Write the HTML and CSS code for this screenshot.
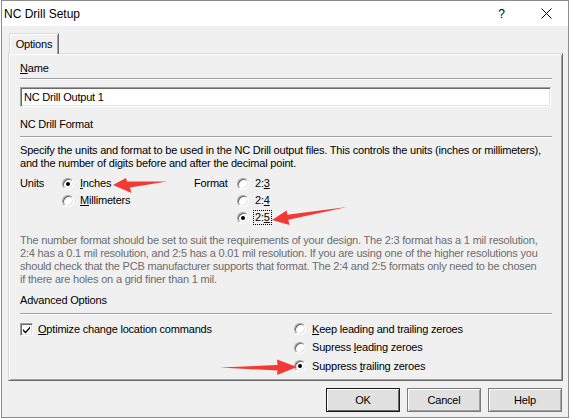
FILE: index.html
```html
<!DOCTYPE html>
<html>
<head>
<meta charset="utf-8">
<link rel="stylesheet" href="styles.css">
</head>
<body>
<div class="window">
  <div class="titlebar">
    <span class="title">NC Drill Setup</span>
    <span class="help">?</span>
    <span class="close"><svg width="11" height="11" viewBox="0 0 11 11"><path d="M0.5 0.5 L10.5 10.5 M10.5 0.5 L0.5 10.5" stroke="#000" stroke-width="1" fill="none"/></svg></span>
  </div>
  <div class="client">
    <div class="tabs"><div class="tab">Options</div></div>
    <div class="panel">
      <div class="section-label"><u>N</u>ame</div>
      <div class="sep"></div>
      <div class="input">NC Drill Output 1</div>
      <div class="section-label gap-lg">NC Drill Format</div>
      <div class="sep sep-sm"></div>
      <p class="desc">Specify the units and format to be used in the NC Drill output files. This controls the units (inches or millimeters),<br>and the number of digits before and after the decimal point.</p>
      <div class="format-row">
        <div class="group units">
          <span class="glabel units-label">Units</span>
          <div class="opts">
            <div class="opt"><span class="radio on"></span><span class="otext"><u>I</u>nches</span></div>
            <div class="opt"><span class="radio"></span><span class="otext"><u>M</u>illimeters</span></div>
          </div>
        </div>
        <div class="group format">
          <span class="glabel format-label">Format</span>
          <div class="opts">
            <div class="opt"><span class="radio"></span><span class="otext">2:<u>3</u></span></div>
            <div class="opt"><span class="radio"></span><span class="otext">2:<u>4</u></span></div>
            <div class="opt"><span class="radio on"></span><span class="otext focus">2:<u>5</u></span></div>
          </div>
        </div>
      </div>
      <p class="note">The number format should be set to suit the requirements of your design. The 2:3 format has a 1 mil resolution,<br>2:4 has a 0.1 mil resolution, and 2:5 has a 0.01 mil resolution. If you are using one of the higher resolutions you<br>should check that the PCB manufacturer supports that format. The 2:4 and 2:5 formats only need to be chosen<br>if there are holes on a grid finer than 1 mil.</p>
      <div class="section-label gap-md">Advanced Options</div>
      <div class="sep sep-md"></div>
      <div class="adv">
        <div class="adv-left">
          <div class="opt">
            <span class="check"><svg width="9" height="9" viewBox="0 0 9 9"><path d="M1 4 L3.5 6.5 L8 1.5 L8 3.5 L3.5 8.5 L1 6 Z" fill="#000"/></svg></span>
            <span class="otext"><u>O</u>ptimize change location commands</span>
          </div>
        </div>
        <div class="adv-right">
          <div class="opt"><span class="radio"></span><span class="otext"><u>K</u>eep leading and trailing zeroes</span></div>
          <div class="opt"><span class="radio"></span><span class="otext">Supress <u>l</u>eading zeroes</span></div>
          <div class="opt"><span class="radio on"></span><span class="otext">Suppress <u>t</u>railing zeroes</span></div>
        </div>
      </div>
    </div>
    <div class="buttons">
      <div class="btn default">OK</div>
      <div class="btn">Cancel</div>
      <div class="btn">Help</div>
    </div>
  </div>
</div>
<svg class="arrows" width="572" height="419" viewBox="0 0 572 419">
  <polygon points="113,185 126,178 127,181.5 167,181.5 130,187.5 131.5,193" fill="#f23a33"/>
  <polygon points="272,220 286.6,210.5 287.4,214.8 347,207 288.3,219.8 289.5,225" fill="#f23a33"/>
  <polygon points="297,367 277,359.5 277.5,365 220,367.5 277.5,370.5 277,375" fill="#f23a33"/>
</svg>
</body>
</html>
```

FILE: styles.css
```css
* { box-sizing: border-box; }
html, body { margin: 0; padding: 0; background: #ffffff; }
body {
  position: relative;
  width: 572px;
  height: 419px;
  overflow: hidden;
  font-family: "Liberation Sans", Arial, sans-serif;
  font-size: 11px;
  letter-spacing: -0.2px;
  color: #000;
}
u { text-decoration: underline; text-underline-offset: 1px; text-decoration-thickness: 1px; }

.window {
  margin-left: 1px;
  width: 568px;
  height: 418px;
  border: 1px solid #8c8c8c;
  background: #f0f0f0;
  display: flex;
  flex-direction: column;
}
.titlebar {
  height: 25px;
  background: #ffffff;
  display: flex;
  align-items: center;
  padding-left: 2px;
  flex: none;
}
.title { font-size: 12px; letter-spacing: 0; color: #000; }
.help { margin-left: auto; font-size: 12px; letter-spacing: 0; margin-right: 36px; }
.close { display: flex; margin-right: 16px; }

.client {
  flex: 1;
  padding: 7px 5px 0 6px;
  display: flex;
  flex-direction: column;
}
.tabs { display: flex; height: 21px; margin-bottom: -1px; position: relative; z-index: 1; }
.tab {
  margin-left: 1px;
  width: 50px;
  height: 21px;
  background: #f0f0f0;
  border-top: 1px solid #d9d9d9;
  border-left: 1px solid #d9d9d9;
  border-right: 1px solid #696969;
  box-shadow: inset 1px 1px #ffffff, inset -1px 0 #a0a0a0;
  display: flex;
  justify-content: center;
  padding-top: 4px;
  line-height: 13px;
}
.panel {
  height: 328px;
  border-top: 1px solid #d9d9d9;
  border-left: 1px solid #d9d9d9;
  border-right: 1px solid #696969;
  border-bottom: 1px solid #696969;
  box-shadow: inset 1px 1px #ffffff, inset -1px -1px #a0a0a0;
  padding: 8px 10px 0 11px;
  display: flex;
  flex-direction: column;
}
.section-label { line-height: 13px; height: 13px; }
.gap-lg { margin-top: 11px; }
.gap-md { margin-top: 8px; }
.sep {
  height: 2px;
  margin-top: 3px;
  border-top: 1px solid #a0a0a0;
  border-bottom: 1px solid #ffffff;
  flex: none;
}
.sep-sm { margin-top: 5px; }
.sep-md { margin-top: 6px; }
.input {
  margin-top: 7px;
  margin-right: 1px;
  height: 20px;
  background: #fff;
  border-top: 1px solid #a0a0a0;
  border-left: 1px solid #a0a0a0;
  border-right: 1px solid #ffffff;
  border-bottom: 1px solid #ffffff;
  box-shadow: inset 1px 1px #696969, inset -1px -1px #e3e3e3;
  padding: 3px 0 0 3px;
  line-height: 13px;
}
.desc { margin: 6px 0 0 0; line-height: 13px; white-space: nowrap; }
.note { margin: 8px 0 0 0; line-height: 13px; white-space: nowrap; color: #6d6d6d; }

.format-row { display: flex; margin-top: 5px; }
.group { display: flex; }
.units { width: 174px; }
.glabel { line-height: 17px; }
.units-label { width: 42px; }
.format-label { width: 43px; }
.opts { display: flex; flex-direction: column; }
.opt { display: flex; align-items: center; height: 17px; }
.otext { line-height: 13px; margin-left: 6px; }
.focus { outline: 1px dotted #000; outline-offset: 0; padding: 0 1px; margin-left: 5px; }

.radio {
  position: relative;
  width: 12px;
  height: 12px;
  border-radius: 50%;
  background: #fff;
  border: 1px solid;
  border-color: #a0a0a0 #ffffff #ffffff #a0a0a0;
  box-shadow: inset 1px 1px #696969, inset -1px -1px #e3e3e3;
  flex: none;
}
.radio.on::after {
  content: "";
  position: absolute;
  left: 3px;
  top: 3px;
  width: 4px;
  height: 4px;
  border-radius: 50%;
  background: #000;
}
.check {
  width: 13px;
  height: 13px;
  background: #fff;
  border: 1px solid;
  border-color: #a0a0a0 #ffffff #ffffff #a0a0a0;
  box-shadow: inset 1px 1px #696969, inset -1px -1px #e3e3e3;
  display: flex;
  align-items: center;
  justify-content: center;
  flex: none;
}
.adv { display: flex; margin-top: 5px; }
.adv-left { width: 274px; }
.adv-left .opt { height: 19px; }
.adv-left .otext { margin-left: 5px; }
.adv-right .opt { height: 18.5px; }

.buttons {
  display: flex;
  justify-content: flex-end;
  gap: 7px;
  margin-top: 7px;
  padding-right: 1px;
}
.btn {
  width: 74px;
  height: 24px;
  background: #e1e1e1;
  border: 1px solid #7a7a7a;
  box-shadow: inset 1px 1px #ffffff, inset -1px -1px #a0a0a0;
  display: flex;
  align-items: center;
  justify-content: center;
  line-height: 13px;
}
.btn.default { border-color: #1a1a1a; box-shadow: inset 1px 1px #ffffff, inset -1px -1px #696969; }

.arrows { position: absolute; left: 0; top: 0; pointer-events: none; }
```
